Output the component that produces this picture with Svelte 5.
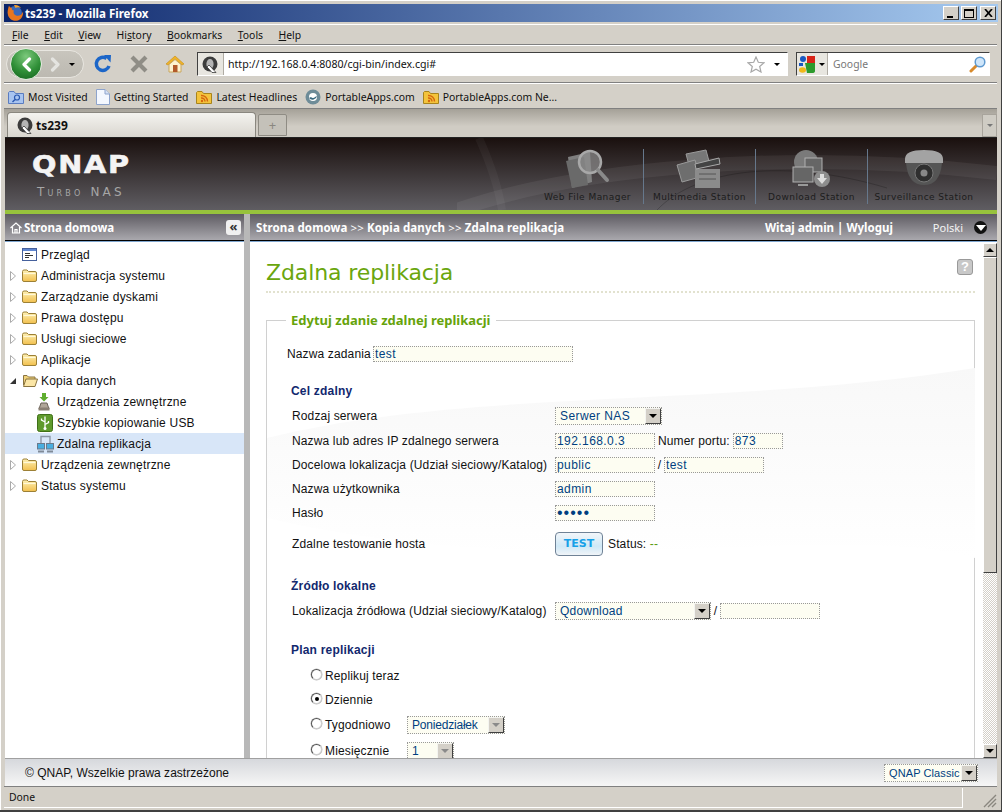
<script>
  const menus = [
    { pre: '', key: 'F', post: 'ile' },
    { pre: '', key: 'E', post: 'dit' },
    { pre: '', key: 'V', post: 'iew' },
    { pre: 'Hi', key: 's', post: 'tory' },
    { pre: '', key: 'B', post: 'ookmarks' },
    { pre: '', key: 'T', post: 'ools' },
    { pre: '', key: 'H', post: 'elp' }
  ];

  const tree = [
    { label: 'Przegląd', icon: 'page' },
    { label: 'Administracja systemu', icon: 'folder' },
    { label: 'Zarządzanie dyskami', icon: 'folder' },
    { label: 'Prawa dostępu', icon: 'folder' },
    { label: 'Usługi sieciowe', icon: 'folder' },
    { label: 'Aplikacje', icon: 'folder' },
    { label: 'Kopia danych', icon: 'open' },
    { label: 'Urządzenia zewnętrzne', icon: 'ext', sub: true },
    { label: 'Szybkie kopiowanie USB', icon: 'usb', sub: true },
    { label: 'Zdalna replikacja', icon: 'net', sub: true, active: true },
    { label: 'Urządzenia zewnętrzne', icon: 'folder' },
    { label: 'Status systemu', icon: 'folder' }
  ];

  const apps = ['Web File Manager', 'Multimedia Station', 'Download Station', 'Surveillance Station'];
</script>

{#snippet favicon()}
  <svg width="17" height="17" viewBox="0 0 17 17">
    <circle cx="8" cy="8" r="7.500" fill="#3c3c3c" />
    <ellipse cx="8" cy="8" rx="3.600" ry="5" fill="#b4b4b4" />
    <path d="M7 9 L14 16.500 L10 16.500 L5 11 Z" fill="#fff" stroke="#222" stroke-width=".7" />
  </svg>
{/snippet}

{#snippet rss()}
  <svg width="16" height="16" viewBox="0 0 16 16">
    <path d="M.5 3.5 V14.5 H15.5 V4.5 H7.5 L6 2.5 H1.5 Z" fill="#f3c33c" stroke="#a8841c" />
    <circle cx="6" cy="12" r="1.2" fill="#d5660e" />
    <path d="M5 9 a3.5 3.5 0 0 1 4 3.5 M5 6.5 a6 6 0 0 1 6.5 6" fill="none" stroke="#d5660e" stroke-width="1.4" />
  </svg>
{/snippet}

{#snippet chevron(color)}
  <svg width="13" height="15" viewBox="0 0 13 15"><path d="M9.5 2 L4 7.5 L9.5 13" fill="none" stroke={color} stroke-width="3.2" stroke-linecap="round" stroke-linejoin="round" /></svg>
{/snippet}

{#snippet arrow(dim)}
  <span class="drop" class:dim><i></i></span>
{/snippet}

{#snippet treeIcon(kind)}
  {#if kind === 'folder'}
    <svg width="15" height="13" viewBox="0 0 15 13"><defs><linearGradient id="fold" x1="0" y1="0" x2="0" y2="1"><stop offset="0" stop-color="#fdf0b4" /><stop offset="1" stop-color="#f2c04e" /></linearGradient></defs><path d="M.5 2.500 Q.5 1 2 1 H5 L6.500 2.500 H13 Q14.500 2.500 14.500 4 V11 Q14.500 12.500 13 12.500 H2 Q.5 12.500 .5 11 Z" fill="url(#fold)" stroke="#9c8036" /><path d="M1.500 4.500 H13.500" stroke="#fff8d8" stroke-width="1.200" /></svg>
  {:else if kind === 'open'}
    <svg width="16" height="13" viewBox="0 0 16 13"><path d="M1.500 11 V1.500 H5 L6.500 3 H13 V5" fill="#f0d27a" stroke="#8a7440" /><path d="M1.500 12.500 L4 5 H15.500 L13 12.500 Z" fill="#fbe6a6" stroke="#8a7440" /></svg>
  {:else if kind === 'page'}
    <svg width="15" height="13" viewBox="0 0 15 13"><rect x=".5" y=".5" width="14" height="12" fill="#fff" stroke="#46609c" /><rect x="1" y="1" width="13" height="2" fill="#5f86d0" /><path d="M3 5.5 H8 M3 7.5 H11 M3 9.5 H7" stroke="#333" /></svg>
  {:else if kind === 'ext'}
    <svg width="14" height="18" viewBox="0 0 14 18"><path d="M5 0 H9 V4 H11.500 L7 8.500 L2.500 4 H5 Z" fill="#5fae2e" /><path d="M2 16 L4 10 H10 L12 16 Z" fill="#b0a698" stroke="#6a6258" /><rect x="1.500" y="14.500" width="11" height="3" fill="#8a8074" /></svg>
  {:else if kind === 'usb'}
    <svg width="16" height="18" viewBox="0 0 16 18"><rect x=".5" y=".5" width="15" height="17" rx="2" fill="#5f9a2c" stroke="#3f7018" /><path d="M8 2.500 V14.500 M8 8 L4.500 6 V4.500 M8 10.500 L11.500 8.500 V7" fill="none" stroke="#fff" stroke-width="1.300" /><circle cx="8" cy="14.500" r="1.500" fill="#fff" /></svg>
  {:else}
    <svg width="17" height="18" viewBox="0 0 17 18"><path d="M4 8 V1.500 H13 V8" fill="none" stroke="#8d98a8" stroke-width="1.400" /><rect x=".5" y="8.500" width="7" height="5.500" fill="#49aee0" stroke="#6a7a8c" /><rect x="9.500" y="8.500" width="7" height="5.500" fill="#49aee0" stroke="#6a7a8c" /><path d="M1 16.500 H7 M10 16.500 H16" stroke="#7f8a98" stroke-width="2" /></svg>
  {/if}
{/snippet}

{#snippet appIcon(i)}
  {#if i === 0}
    <svg width="48" height="40" viewBox="0 0 48 40">
      <path d="M4 8 L26 3 L28 33 L8 39 Z" fill="#7f7f7f" /><path d="M2 12 L20 8 L24 36 L8 39 Z" fill="#6a6a6a" />
      <circle cx="26" cy="13" r="11" fill="#8d8d8d" fill-opacity=".7" stroke="#a8a8a8" stroke-width="2.500" />
      <path d="M34 21 L43 31" stroke="#8a8a8a" stroke-width="4" stroke-linecap="round" />
    </svg>
  {:else if i === 1}
    <svg width="48" height="40" viewBox="0 0 48 40">
      <path d="M10 5 L30 1 L34 16 L14 20 Z" fill="#777" stroke="#9a9a9a" /><path d="M1 16 L19 11 L24 28 L6 33 Z" fill="#6e6e6e" stroke="#9a9a9a" />
      <rect x="19" y="20" width="25" height="19" fill="#8b8b8b" /><path d="M19 15 L43 9 L44 15 L20 20 Z" fill="#444" stroke="#aaa" /><path d="M23 25 H40 M23 30 H40" stroke="#555" />
    </svg>
  {:else if i === 2}
    <svg width="48" height="40" viewBox="0 0 48 40">
      <circle cx="18" cy="13" r="12" fill="#7a7a7a" />
      <rect x="17" y="9" width="17" height="14" fill="#666" stroke="#b0b0b0" /><rect x="5" y="18" width="20" height="15" fill="#666" stroke="#b0b0b0" /><path d="M10 36 H20" stroke="#999" stroke-width="2" />
      <circle cx="34" cy="30" r="8" fill="#8d8d8d" /><path d="M32 25 H36 V29 H39 L34 35 L29 29 H32 Z" fill="#ddd" />
    </svg>
  {:else}
    <svg width="48" height="40" viewBox="0 0 48 40">
      <path d="M5 10 Q5 1 24 1 Q43 1 43 10 V14 H5 Z" fill="#a3a3a3" /><path d="M6 14 H42 Q40 36 24 36 Q8 36 6 14 Z" fill="#555" />
      <circle cx="24" cy="24" r="9" fill="#2f2f2f" stroke="#777" /><circle cx="24" cy="24" r="3.500" fill="#888" />
    </svg>
  {/if}
{/snippet}

<div class="window">
  <div class="titlebar">
    <svg class="fox" width="18" height="18" viewBox="0 0 18 18">
      <circle cx="9" cy="9" r="7" fill="#3a68b8" />
      <path d="M3 1.500 C2 5 1 8 2 11 C3.500 16 8 17.500 12 16.500 C16 15 17.500 11 17 7.500 C16 11 13 12.500 10 11.500 C7.500 10.500 7 8 8 6.500 C6 6.500 5.500 5 6 4 C4.500 4 3.500 3 3 1.500 Z" fill="#e8761e" />
      <path d="M8 1 C11 .5 14 2 15 4 C13 3 11 3 9.500 4 Z" fill="#f4a02c" />
    </svg>
    <span class="title">ts239 - Mozilla Firefox</span>
    <span class="winbtns">
      <span class="winbtn"><i class="min"></i></span>
      <span class="winbtn"><i class="max"></i></span>
      <span class="winbtn close">
        <svg width="9" height="8" viewBox="0 0 9 8"><path d="M1 0 L8 8 M8 0 L1 8" stroke="#000" stroke-width="1.700" /></svg>
      </span>
    </span>
  </div>

  <div class="menubar">
    {#each menus as m}
      <span>{m.pre}<u>{m.key}</u>{m.post}</span>
    {/each}
  </div>

  <div class="navbar">
    <div class="pill">
      <span class="back">{@render chevron('#fff')}</span>
      <span class="fwd">{@render chevron('#e4e4e0')}</span>
      <i class="tri"></i>
    </div>
    <svg class="tool" width="20" height="20" viewBox="0 0 20 20">
      <path d="M16 12 A6.500 6.500 0 1 1 13.500 4.500" fill="none" stroke="#1c66c8" stroke-width="3.500" />
      <path d="M11 1 L18 1 L17.500 8.500 Z" fill="#1c66c8" />
    </svg>
    <svg class="tool" width="20" height="20" viewBox="0 0 20 20">
      <path d="M3 3 L17 17 M17 3 L3 17" stroke="#8f8d86" stroke-width="4.200" />
    </svg>
    <svg class="tool" width="20" height="20" viewBox="0 0 20 20">
      <path d="M1 10 L10 2 L19 10 L17 11 L10 5 L3 11 Z" fill="#f0b428" stroke="#c58a14" stroke-width=".6" />
      <path d="M4 10.500 L10 5.500 L16 10.500 V18 H4 Z" fill="#fdf2cf" stroke="#c9a65c" />
      <rect x="8" y="11" width="4.500" height="7" fill="#b25a2a" />
    </svg>
    <div class="urlbar">
      <span class="urlicon">{@render favicon()}</span>
      <span class="urltext">http://192.168.0.4:8080/cgi-bin/index.cgi#</span>
      <svg width="18" height="17" viewBox="0 0 18 17"><path d="M9 1 L11.300 6.300 L17 6.800 L12.700 10.500 L14 16 L9 13.200 L4 16 L5.300 10.500 L1 6.800 L6.700 6.300 Z" fill="#fff" stroke="#a8a8a8" stroke-width="1.200" /></svg>
      <i class="tri url"></i>
    </div>
    <div class="searchbar">
      <span class="engine">
        <svg width="16" height="17" viewBox="0 0 16 17">
          <circle cx="4" cy="3" r="3" fill="#1a58c0" /><rect x="8" y="0" width="8" height="7" fill="#d82418" />
          <path d="M0 7 H4 V10 L0 10 Z" fill="#1a58c0" /><path d="M6 7 H16 V15 Q16 17 13 17 H8 Z" fill="#2c9a2c" />
          <ellipse cx="3.500" cy="14" rx="3.500" ry="2.800" fill="#f0b818" />
        </svg>
        <i class="tri"></i>
      </span>
      <span class="searchtext">Google</span>
      <svg width="17" height="17" viewBox="0 0 17 17">
        <path d="M7 10 L2 15" stroke="#d88a2c" stroke-width="3" stroke-linecap="round" />
        <circle cx="11" cy="6" r="4.800" fill="#cfe6fa" stroke="#5f9ad0" stroke-width="1.500" />
      </svg>
    </div>
  </div>

  <div class="bookmarks">
    <span class="bm">
      <svg width="16" height="16" viewBox="0 0 16 16"><path d="M.5 3.500 V14.500 H15.500 V4.500 H7.500 L6 2.500 H1.500 Z" fill="#a8c4f0" stroke="#5a7cc0" /><circle cx="9" cy="8.500" r="2.500" fill="none" stroke="#2a58b0" stroke-width="1.200" /><path d="M7 10.500 L4.500 13" stroke="#2a58b0" stroke-width="1.500" /></svg>
      Most Visited
    </span>
    <span class="bm">
      <svg width="14" height="16" viewBox="0 0 14 16"><path d="M.5 .5 H9 L13.500 5 V15.500 H.5 Z" fill="#f4f8ff" stroke="#8ea4cc" /><path d="M9 .5 V5 H13.500" fill="#d6e2f6" stroke="#8ea4cc" /></svg>
      Getting Started
    </span>
    <span class="bm">{@render rss()} Latest Headlines</span>
    <span class="bm">
      <svg width="16" height="16" viewBox="0 0 16 16"><circle cx="8" cy="8" r="7.500" fill="#6e8c98" /><circle cx="8" cy="8" r="4" fill="#fff" /><path d="M4 9 A4.500 4.500 0 0 0 12 7 L10 8 A2.500 2.500 0 0 1 6 8 Z" fill="#3a6a80" /></svg>
      PortableApps.com
    </span>
    <span class="bm">{@render rss()} PortableApps.com Ne...</span>
  </div>

  <div class="tabstrip">
    <div class="tab">{@render favicon()}<b>ts239</b></div>
    <div class="newtab">+</div>
    <div class="tabmenu"><i class="tri grey"></i></div>
  </div>

  <div class="app">
    <header class="head">
      <svg class="arcs" width="540" height="72" viewBox="0 0 540 72">
        <path d="M0 72 C120 30 330 10 540 35" fill="none" stroke="#fff" stroke-opacity=".06" stroke-width="14" />
        <path d="M200 72 C240 30 330 20 430 50" fill="none" stroke="#000" stroke-opacity=".2" />
        <path d="M22 0 Q40 40 45 72" fill="none" stroke="#fff" stroke-opacity=".04" stroke-width="8" />
      </svg>
      <div class="brand">
        <div class="logo">QNAP</div>
        <div class="turbo">Turbo NAS</div>
      </div>
      <nav class="apps">
        {#each apps as name, i}
          <div class="appitem">
            {@render appIcon(i)}
            <span>{name}</span>
          </div>
        {/each}
      </nav>
    </header>

    <div class="bars">
      <div class="sidehead">
        <svg width="12" height="12" viewBox="0 0 12 12"><path d="M.5 6 L6 1 L11.500 6 M2.500 5 V11 H9.500 V5 M5 11 V7.500 H7 V11" fill="none" stroke="#fff" stroke-width="1.200" /></svg>
        <span>Strona domowa</span>
        <span class="collapse">«</span>
      </div>
      <div class="crumbs">
        <span class="path">Strona domowa <em>&gt;&gt;</em> Kopia danych <em>&gt;&gt;</em> Zdalna replikacja</span>
        <span class="user">Witaj admin | Wyloguj</span>
        <span class="lang">Polski</span>
        <span class="langdrop"><i></i></span>
      </div>
    </div>

    <div class="body">
      <aside class="side">
        {#each tree as item}
          <div class="node" class:sub={item.sub} class:active={item.active}>
            {#if !item.sub}
              <span class="twistbox">
                {#if item.icon === 'open'}
                  <svg width="6" height="6" viewBox="0 0 6 6"><path d="M0 6 L6 0 V6 Z" fill="#333" /></svg>
                {:else if item.icon === 'folder'}
                  <svg width="6" height="10" viewBox="0 0 6 10"><path d="M.5 .5 L5.500 5 L.5 9.500 Z" fill="#fff" stroke="#aaa" /></svg>
                {/if}
              </span>
            {/if}
            <span class="nodeicon">{@render treeIcon(item.icon)}</span>
            <span>{item.label}</span>
          </div>
        {/each}
      </aside>

      <main class="main">
        <div class="pagehead">
          <h1>Zdalna replikacja</h1>
          <span class="help">?</span>
        </div>

        <fieldset>
          <legend>Edytuj zdanie zdalnej replikacji</legend>
          <svg class="swoosh" width="708" height="300" viewBox="0 0 708 300">
            <defs>
              <linearGradient id="swoop" x1="0" y1="0" x2="0" y2="1">
                <stop offset="0" stop-color="#f8f8f8" />
                <stop offset="1" stop-color="#fff" />
              </linearGradient>
            </defs>
            <path d="M0 70 C200 20 460 40 708 0 V190 C560 150 300 220 0 150 Z" fill="url(#swoop)" />
          </svg>

          <div class="row taskname">
            <span class="tasklabel">Nazwa zadania</span>
            <input class="field name" value="test" readonly />
          </div>

          <h2 class="first">Cel zdalny</h2>
          <div class="row tight">
            <span class="lbl">Rodzaj serwera</span>
            <span class="select server"><span>Serwer NAS</span>{@render arrow(false)}</span>
          </div>
          <div class="row tight">
            <span class="lbl">Nazwa lub adres IP zdalnego serwera</span>
            <input class="field" value="192.168.0.3" readonly />
            <span class="after">Numer portu:</span>
            <input class="field port" value="873" readonly />
          </div>
          <div class="row">
            <span class="lbl">Docelowa lokalizacja (Udział sieciowy/Katalog)</span>
            <input class="field" value="public" readonly />
            <span class="slash">/</span>
            <input class="field" value="test" readonly />
          </div>
          <div class="row">
            <span class="lbl">Nazwa użytkownika</span>
            <input class="field" value="admin" readonly />
          </div>
          <div class="row">
            <span class="lbl">Hasło</span>
            <input class="field pass" type="password" value="admin" readonly />
          </div>
          <div class="row hosttest">
            <span class="lbl">Zdalne testowanie hosta</span>
            <span class="testbtn">TEST</span>
            <span class="status">Status: <b>--</b></span>
          </div>

          <h2 class="local">Źródło lokalne</h2>
          <div class="row tight">
            <span class="lbl">Lokalizacja źródłowa (Udział sieciowy/Katalog)</span>
            <span class="select source"><span>Qdownload</span>{@render arrow(false)}</span>
            <span class="slash">/</span>
            <input class="field" readonly />
          </div>

          <h2 class="plan">Plan replikacji</h2>
          <div class="row radio tight2">
            <i class="rb"></i><span>Replikuj teraz</span>
          </div>
          <div class="row radio">
            <i class="rb on"></i><span>Dziennie</span>
          </div>
          <div class="row radio tight">
            <i class="rb"></i><span class="rlabel">Tygodniowo</span>
            <span class="select weekday"><span>Poniedziałek</span>{@render arrow(true)}</span>
          </div>
          <div class="row radio tight2">
            <i class="rb"></i><span class="rlabel">Miesięcznie</span>
            <span class="select monthday"><span>1</span>{@render arrow(true)}</span>
          </div>
        </fieldset>
      </main>

      <div class="scroll">
        <span class="sbtn"><i class="up"></i></span>
        <span class="thumb"></span>
        <span class="track"></span>
        <span class="sbtn"><i class="down"></i></span>
      </div>
    </div>

    <footer class="foot">
      <span>© QNAP, Wszelkie prawa zastrzeżone</span>
      <span class="select theme"><span>QNAP Classic</span>{@render arrow(false)}</span>
    </footer>
  </div>

  <div class="statusbar">
    <span class="done">Done</span>
    <svg width="14" height="14" viewBox="0 0 14 14"><path d="M13 1 L1 13 M13 5 L5 13 M13 9 L9 13" stroke="#8a877f" stroke-width="1.400" /></svg>
  </div>
</div>

<style>
  :global(body) {
    margin: 0;
    background: #d4d0c8;
    overflow: hidden;
  }

  .window {
    width: 1002px;
    height: 812px;
    box-sizing: border-box;
    padding: 4px 4px 2px;
    background: #d4d0c8;
    border-right: 1px solid #404040;
    border-bottom: 2px solid #404040;
    box-shadow: inset 1px 1px 0 #fff;
    display: flex;
    flex-direction: column;
    font-family: "Noto Sans", "Liberation Sans", sans-serif;
    font-size: 10.4px;
    color: #111;
    overflow: hidden;
  }

  .titlebar {
    height: 18px;
    flex: none;
    display: flex;
    align-items: center;
    background: linear-gradient(90deg, #0a246a, #a6caf0);
    color: #fff;
    margin-right: -1px;
  }
  .fox { margin-left: 2px; flex: none; }
  .title {
    margin-left: 1px;
    font: bold 11.5px "Noto Sans", sans-serif;
  }
  .winbtns { margin-left: auto; display: flex; margin-right: 2px; }
  .winbtn {
    width: 14px;
    height: 12px;
    margin-left: 2px;
    background: #d4d0c8;
    border: 1px solid;
    border-color: #fff #404040 #404040 #fff;
    position: relative;
    display: flex;
    align-items: center;
    justify-content: center;
  }
  .winbtn.close { margin-left: 3px; }
  .min { width: 6px; height: 2px; background: #000; margin-top: 7px; margin-right: 3px; }
  .max { width: 8px; height: 6px; border: 1px solid #000; border-top-width: 2px; }

  .menubar {
    height: 21px;
    margin-top: 2px;
    flex: none;
    display: flex;
    align-items: center;
    gap: 15.5px;
    padding-left: 8px;
    border-top: 1px solid #fff;
    border-bottom: 1px solid #808080;
    box-sizing: border-box;
  }

  .navbar {
    height: 38px;
    flex: none;
    display: flex;
    align-items: center;
    padding-left: 2px;
    border-top: 1px solid #fff;
    border-bottom: 1px solid #808080;
    box-sizing: border-box;
  }
  .pill {
    width: 78px;
    height: 28px;
    display: flex;
    align-items: center;
    box-sizing: border-box;
    border-radius: 14px;
    background: linear-gradient(#c8c5bd, #bcb9b1);
    border: 1px solid #e8e6e0;
    position: relative;
  }
  .back {
    width: 32px;
    height: 32px;
    margin-left: 3px;
    border-radius: 50%;
    flex: none;
    display: flex;
    align-items: center;
    justify-content: center;
    background: radial-gradient(circle at 50% 25%, #7cc97c, #2f8f37 55%, #14601e);
    border: 1px solid #e4ece0;
    box-sizing: border-box;
  }
  .fwd { margin-left: 7px; display: flex; transform: scaleX(-1); }
  .tri {
    width: 0;
    height: 0;
    border: 3px solid transparent;
    border-top: 3px solid #000;
    border-bottom: 0;
    display: block;
  }
  .pill .tri { margin-left: 7px; }
  .tri.url { margin: 0 7px 0 9px; }
  .tri.grey { border-top-color: #777; }
  .tool { margin-left: 16px; flex: none; }
  .tool:first-of-type { margin-left: 9px; }

  .urlbar, .searchbar {
    height: 24px;
    box-sizing: border-box;
    display: flex;
    align-items: center;
    background: #fff;
    border: 1px solid;
    border-color: #404040 #fff #fff #404040;
    box-shadow: 0 0 0 1px #d4d0c8;
  }
  .urlbar { width: 591px; margin-left: 12px; }
  .urlicon {
    width: 25px;
    height: 22px;
    display: flex;
    align-items: center;
    justify-content: center;
    background: #e8e6e0;
    border-right: 1px solid #b0aca4;
    flex: none;
  }
  .urltext {
    flex: 1;
    margin-left: 4px;
    font-size: 10.6px;
  }
  .searchbar { width: 194px; margin-left: 8px; }
  .engine {
    width: 31px;
    height: 22px;
    display: flex;
    align-items: center;
    justify-content: center;
    gap: 4px;
    background: #e8e6e0;
    border-right: 1px solid #b0aca4;
    flex: none;
    box-sizing: border-box;
  }
  .searchtext { flex: 1; margin-left: 5px; color: #777; }
  .searchbar svg:last-child { margin-right: 3px; }

  .bookmarks {
    height: 26px;
    flex: none;
    display: flex;
    align-items: center;
    gap: 8px;
    padding: 2px 0 0 4px;
    border-top: 1px solid #fff;
    border-bottom: 1px solid #808080;
    box-sizing: border-box;
  }
  .bm { display: flex; align-items: center; gap: 4px; white-space: nowrap; }

  .tabstrip {
    height: 29px;
    flex: none;
    display: flex;
    align-items: flex-end;
    padding-left: 3px;
    background: linear-gradient(#a5a198, #d0ccc4 60%);
    box-sizing: border-box;
  }
  .tab {
    width: 249px;
    height: 26px;
    box-sizing: border-box;
    display: flex;
    align-items: center;
    gap: 2px;
    padding-left: 9px;
    border: 1px solid #8a877f;
    border-bottom: 0;
    border-radius: 4px 4px 0 0;
    background: linear-gradient(#f4f3ef, #d8d5ce);
    font-size: 12px;
  }
  .newtab {
    width: 29px;
    height: 22px;
    margin: 0 0 2px 2px;
    box-sizing: border-box;
    border: 1px solid #8f8c84;
    border-radius: 2px 2px 0 0;
    background: #c4c1b9;
    color: #8a877f;
    text-align: center;
    font-size: 13px;
    line-height: 20px;
  }
  .tabmenu {
    width: 15px;
    height: 23px;
    margin: 0 0 1px auto;
    box-sizing: border-box;
    border: 1px solid #a8a49c;
    background: #cfccc4;
    display: flex;
    align-items: center;
    justify-content: center;
  }

  .app {
    flex: none;
    height: 648px;
    display: flex;
    flex-direction: column;
    margin-left: 1px;
    background: #fff;
    box-shadow: 0 -1px 0 #222;
    font-family: "Liberation Sans", Arial, sans-serif;
    font-size: 12px;
  }

  .head {
    height: 72px;
    flex: none;
    display: flex;
    justify-content: space-between;
    position: relative;
    overflow: hidden;
    background: linear-gradient(#1a100e, #5f5d62);
    border-bottom: 4px solid #97c23c;
  }
  .arcs { position: absolute; right: 0; top: 0; }
  .brand { padding: 16px 0 0 27px; position: relative; }
  .logo {
    font: bold 25px/21px "DejaVu Sans", sans-serif;
    letter-spacing: 1.5px;
    color: #f4f4f4;
    -webkit-text-stroke: .6px #f4f4f4;
    transform: scaleX(1.15);
    transform-origin: left;
  }
  .turbo {
    margin: 11px 0 0 5px;
    font: 12px/12px "DejaVu Sans", sans-serif;
    font-variant: small-caps;
    letter-spacing: 3.2px;
    color: #a6a6a6;
  }
  .apps { display: flex; padding: 11px 17px 0 0; position: relative; }
  .appitem {
    width: 112px;
    height: 55px;
    box-sizing: border-box;
    display: flex;
    flex-direction: column;
    align-items: center;
    border-right: 1px solid #66788c;
    font: 9px/12px "DejaVu Sans", sans-serif;
    letter-spacing: .45px;
    color: #1c1c1c;
  }
  .appitem svg { margin-bottom: 2px; }
  .appitem:last-child { border-right: 0; }

  .bars {
    height: 28px;
    flex: none;
    display: flex;
    gap: 6px;
    background: #b8b8b8;
    font: bold 11.5px "Noto Sans", sans-serif;
    color: #fff;
  }
  .sidehead, .crumbs {
    display: flex;
    align-items: center;
    box-sizing: border-box;
    height: 28px;
    background: linear-gradient(#5e5b62, #acabb0);
    border-bottom: 1px solid #7fa6cf;
    box-shadow: inset 0 -1px 0 #000;
    position: relative;
  }
  .sidehead { width: 239px; padding-left: 5px; gap: 2px; flex: none; }
  .collapse {
    margin-left: auto;
    margin-right: 3px;
    width: 15px;
    height: 15px;
    border-radius: 3px;
    background: #f0f0f0;
    color: #333;
    font-size: 13px;
    line-height: 12px;
    text-align: center;
  }
  .crumbs { flex: 1; padding-left: 6px; }
  .path { letter-spacing: .1px; }
  .crumbs em { font-style: normal; font-weight: 400; }
  .user { margin-left: auto; }
  .lang {
    margin-left: 40px;
    font: 11px "Noto Sans", sans-serif;
    color: #f4f4f4;
  }
  .langdrop {
    width: 13px;
    height: 13px;
    margin: 0 10px 0 11px;
    border-radius: 50%;
    background: #111;
    display: flex;
    align-items: center;
    justify-content: center;
  }
  .langdrop i {
    width: 0;
    height: 0;
    border: 5px solid transparent;
    border-top: 6px solid #fff;
    border-bottom: 0;
  }

  .body {
    flex: 1;
    min-height: 0;
    display: flex;
    overflow: hidden;
  }
  .side {
    flex: none;
    width: 245px;
    padding-top: 2px;
    box-sizing: border-box;
    border-right: 6px solid #b8b8b8;
    background: #fff;
    letter-spacing: .2px;
    color: #111;
  }
  .node {
    height: 21px;
    display: flex;
    align-items: center;
    padding-left: 5px;
  }
  .node.sub { padding-left: 32px; }
  .node.active { background: #d8e6f8; }
  .twistbox {
    width: 12px;
    flex: none;
    display: flex;
    align-items: center;
  }
  .nodeicon {
    width: 19px;
    flex: none;
    display: flex;
    align-items: center;
  }
  .sub .nodeicon { width: 20px; }

  .main {
    flex: 1;
    min-width: 0;
    padding: 0 8px 0 16px;
    overflow: hidden;
    background: #fff;
  }
  .pagehead {
    height: 51px;
    box-sizing: border-box;
    padding-top: 17px;
    display: flex;
    justify-content: space-between;
    align-items: flex-start;
    border-bottom: 2px dotted #e2e2cf;
    margin-bottom: 19px;
  }
  h1 {
    margin: 0;
    font: 400 22px/28px "DejaVu Sans", sans-serif;
    letter-spacing: -.1px;
    color: #6aa60e;
  }
  .help {
    width: 16px;
    height: 16px;
    margin: 0 2px 0 0;
    border-radius: 3px;
    box-sizing: border-box;
    border: 1px solid #999;
    background: #c8c8c8;
    color: #fff;
    font: bold 13px/14px "Liberation Sans", sans-serif;
    text-align: center;
  }

  fieldset {
    margin: 0;
    padding: 0 0 0 20px;
    height: 500px;
    position: relative;
    border: 1px solid #d0d0d0;
    box-sizing: border-box;
  }
  legend {
    padding: 0 5px;
    margin-left: -1px;
    font: bold 13px/16px "Noto Sans", sans-serif;
    color: #66a30b;
  }
  .swoosh { position: absolute; left: 0; top: 40px; pointer-events: none; }

  .row {
    height: 24px;
    display: flex;
    align-items: center;
    letter-spacing: .14px;
    position: relative;
    margin-left: 5px;
  }
  .row.tight { margin-top: 1px; }
  .row.tight2 { margin-top: 2px; }
  .row.taskname { margin: 14px 0 0 0; }
  .tasklabel { margin-right: 2px; }
  .lbl { width: 263px; flex: none; white-space: nowrap; }
  .hosttest { margin-top: 7px; }

  h2 {
    height: 24px;
    margin: 0;
    position: relative;
    margin-left: 4px;
    font: bold 12px/24px "Liberation Sans", sans-serif;
    letter-spacing: .2px;
    color: #12286e;
  }
  h2.first { margin-top: 13px; }
  h2.local { margin-top: 18px; }
  h2.plan { margin-top: 15px; }

  .field {
    width: 100px;
    height: 16px;
    box-sizing: border-box;
    padding: 0 0 0 1px;
    background: #fdfdf2;
    border: 1px dotted #999;
    font: 12px "Liberation Sans", sans-serif;
    letter-spacing: .42px;
    color: #003f80;
    outline: none;
  }
  .field.pass { font-size: 16px; letter-spacing: 1px; }
  .field.name { width: 200px; }
  .field.port { width: 50px; }
  .after { margin: 0 3px 0 3px; }
  .slash { width: 9px; text-align: center; flex: none; }

  .select {
    height: 18px;
    box-sizing: border-box;
    display: flex;
    align-items: center;
    justify-content: space-between;
    padding-left: 4px;
    background: #fdfdf2;
    border: 1px dotted #999;
    font-size: 12px;
    letter-spacing: .42px;
    color: #003f80;
    white-space: nowrap;
  }
  .server { width: 107px; }
  .source { width: 156px; letter-spacing: .2px; }
  .weekday { width: 98px; letter-spacing: -.2px; }
  .monthday { width: 47px; }
  .theme { width: 94px; padding-left: 4px; font-size: 11px; letter-spacing: .1px; }
  .drop {
    width: 16px;
    height: 16px;
    flex: none;
    box-sizing: border-box;
    background: #d4d0c8;
    border: 1px solid;
    border-color: #f4f4f0 #404040 #404040 #f4f4f0;
    display: flex;
    align-items: center;
    justify-content: center;
  }
  .drop i {
    width: 0;
    height: 0;
    border: 4px solid transparent;
    border-top: 4px solid #000;
    border-bottom: 0;
  }
  .drop.dim i { border-top-color: #8a8a8a; }

  .testbtn {
    width: 48px;
    height: 24px;
    box-sizing: border-box;
    border: 1px solid #6f8296;
    border-radius: 4px;
    background: linear-gradient(#f2f6fa, #cfe8f6 60%, #f0f4f8);
    color: #16a0e8;
    font: bold 11px/22px "DejaVu Sans", sans-serif;
    text-align: center;
    letter-spacing: 0;
  }
  .status { margin-left: 5px; }
  .status b { font-weight: 400; color: #5a9a10; }

  .radio { padding-left: 19px; }
  .rb {
    width: 11px;
    height: 11px;
    flex: none;
    margin: -3px 3px 0 0;
    border-radius: 50%;
    box-sizing: border-box;
    background: #fff;
    border: 1px solid;
    border-color: #555 #ccc #ccc #555;
    box-shadow: 0 0 0 .5px #bbb;
    position: relative;
  }
  .rb.on::after {
    content: "";
    position: absolute;
    left: 2.5px;
    top: 2.5px;
    width: 4px;
    height: 4px;
    border-radius: 50%;
    background: #000;
  }
  .rlabel { width: 82px; flex: none; }

  .scroll {
    width: 14px;
    flex: none;
    padding-top: 1px;
    display: flex;
    flex-direction: column;
    box-sizing: border-box;
    background: #fff;
    margin-right: 0;
  }
  .sbtn {
    height: 14px;
    flex: none;
    box-sizing: border-box;
    background: #d4d0c8;
    border: 1px solid;
    border-color: #fff #404040 #404040 #fff;
    display: flex;
    align-items: center;
    justify-content: center;
  }
  .sbtn i { width: 0; height: 0; border: 4px solid transparent; }
  .sbtn .up { border-bottom: 4px solid #000; border-top: 0; }
  .sbtn .down { border-top: 4px solid #000; border-bottom: 0; }
  .thumb {
    height: 316px;
    flex: none;
    box-sizing: border-box;
    background: #d4d0c8;
    border: 1px solid;
    border-color: #fff #404040 #404040 #fff;
  }
  .track {
    flex: 1;
    background: repeating-conic-gradient(#d4d0c8 0 25%, #fff 0 50%) 0 0 / 2px 2px;
  }

  .foot {
    height: 28px;
    flex: none;
    display: flex;
    align-items: center;
    justify-content: space-between;
    padding: 0 19px 0 20px;
    box-sizing: border-box;
    border-top: 1px solid #a0a0a0;
    background: linear-gradient(#d6d8dc, #f6f6f6);
    letter-spacing: .02px;
  }

  .statusbar {
    flex: 1;
    display: flex;
    align-items: flex-end;
    justify-content: space-between;
    border-top: 1px solid #808080;
  }
  .done {
    flex: 1;
    height: 19px;
    margin-right: 20px;
    padding-left: 5px;
    line-height: 19px;
    border-bottom: 1px solid #fff;
    border-right: 1px solid #fff;
  }
</style>
